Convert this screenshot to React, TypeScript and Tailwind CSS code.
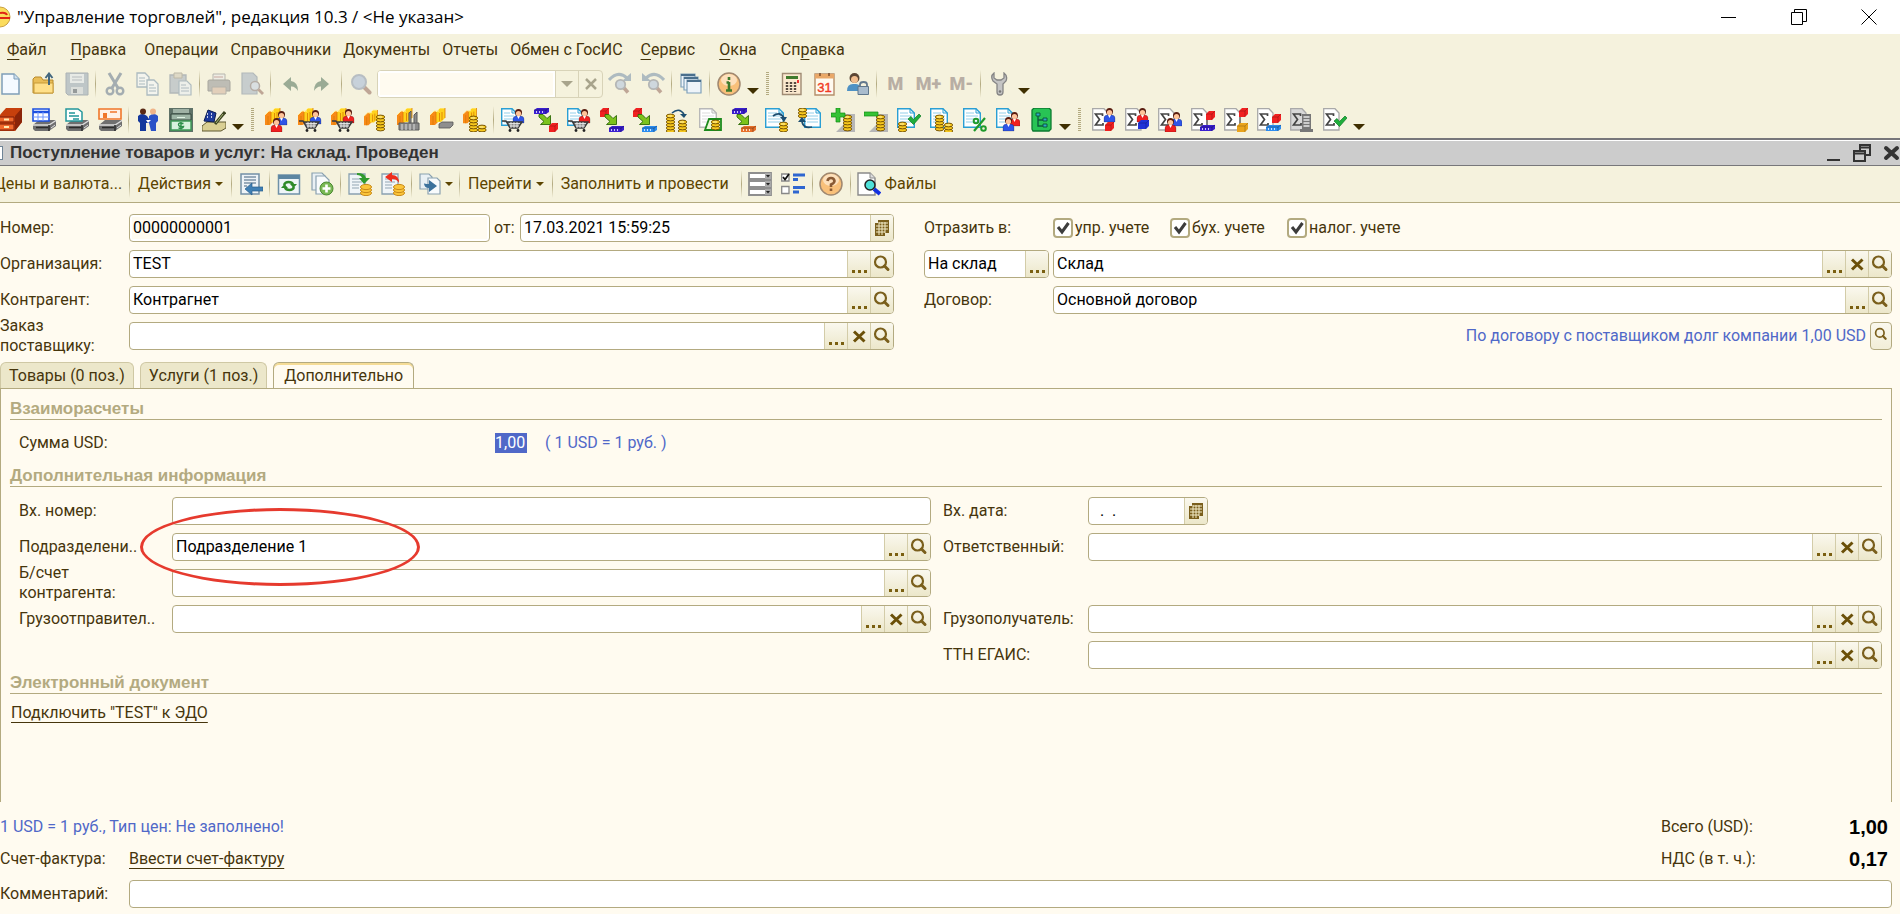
import { useId } from "react";
import type { ReactNode } from "react";
import clsx from "clsx";

type Tool = "dots" | "clear" | "open" | "calendar";

const BLUE = "#2f55e8";
const RED = "#f02020";

/* ---------- icon parts, all drawn on a 24x24 grid ---------- */

function Svg({ children, faded }: { children: ReactNode; faded?: boolean }) {
    return (
        <svg viewBox="0 0 24 24" aria-hidden="true" className={clsx("size-6 shrink-0", faded && "opacity-60")}>
            {children}
        </svg>
    );
}

function Person({ x, y, c }: { x: number; y: number; c: string }) {
    return (
        <g transform={`translate(${x} ${y})`}>
            <path d="M1 14V10Q1 7 5 7H8Q12 7 12 10V14Z" fill={c} stroke="#00000055" strokeWidth=".6" />
            <path d="M5 7L6.500 10L8 7Z" fill="#fff" />
            <circle cx="6.500" cy="3.500" r="3.500" fill="#5a1d10" />
            <circle cx="6.500" cy="4.600" r="2.600" fill="#ffc49a" />
        </g>
    );
}

function Cart() {
    return (
        <g>
            <path d="M1 13H5L9 20H17L21 14H5" fill="#8a8a8a" stroke="#3a3a3a" strokeWidth="1.400" />
            <path d="M8 15.500H19M9 18H18M10 14V20M13 14V20M16 14V20" stroke="#f0f0f0" strokeWidth=".8" fill="none" />
            <circle cx="9" cy="22.500" r="1.400" fill="#222" />
            <circle cx="17" cy="22.500" r="1.400" fill="#222" />
        </g>
    );
}

function Coins({ x, y, n }: { x: number; y: number; n: number }) {
    return (
        <g transform={`translate(${x} ${y})`}>
            {Array.from({ length: n }, (_, i) => (
                <ellipse key={i} cx="4.500" cy={(n - i) * 3 - 1} rx="4.200" ry="1.900" fill="#f7c81e" stroke="#6b4a00" strokeWidth=".9" />
            ))}
            <path d="M2 2H6" stroke="#fff6b0" />
        </g>
    );
}

function Stack() {
    return (
        <g>
            <path d="M0 17V7L4 3H9V13L5 17Z" fill="#f88a18" />
            <path d="M6 14V4L10 0H15V10L11 14Z" fill="#ffd21c" />
            <path d="M0 7L4 3H9M6 4L10 0H15" stroke="#fff0a0" fill="none" />
            <path d="M3 17V8M6 14V4M9.500 13V5M12 12V4M15 10V0" stroke="#d97800" strokeWidth=".8" fill="none" />
        </g>
    );
}

function Paper({ x = 0, y = 0, w = 16, h = 20, edge = "#2a9fd4" }: { x?: number; y?: number; w?: number; h?: number; edge?: string }) {
    return (
        <g transform={`translate(${x} ${y})`}>
            <path d={`M.7 .7H${w - 5}L${w - 0.7} 5V${h - 0.7}H.7Z`} fill="#fff" stroke={edge} strokeWidth="1.400" />
            <path d={`M${w - 5} .7V5H${w - 0.7}`} fill="none" stroke={edge} />
            <path d={`M3 5H${w - 7}M3 8H${w - 3}M3 11H${w - 3}M3 14H${w - 3}`} stroke={edge} strokeOpacity=".5" />
        </g>
    );
}

function Cube({ x, y, c, w = 9 }: { x: number; y: number; c: string; w?: number }) {
    return (
        <g transform={`translate(${x} ${y})`}>
            <path d={`M0 3L3 0H${w}V6L${w - 3} 9H0Z`} fill={c} />
            <path d={`M0 3H${w - 3}V9M${w - 3} 3L${w} 0`} stroke="#00000044" fill="none" strokeWidth=".8" />
        </g>
    );
}

function Slab({ x, y, c }: { x: number; y: number; c: string }) {
    return (
        <g transform={`translate(${x} ${y})`}>
            <path d="M0 2L3 0H15V4L12 6H0Z" fill={c} />
            <path d="M2 4H3M5 4H6M8 4H9" stroke="#fff" strokeWidth="1.300" />
            <path d="M0 2H12V6M12 2L15 0" stroke="#00000066" fill="none" strokeWidth=".8" />
        </g>
    );
}

const GreenArrow = () => (
    <path d="M5 6.500H9L13 10.500L16.500 7.500V16.500H6.500L10 13.500L5 9Z" fill="#7cc31c" stroke="#2f6a08" strokeWidth=".9" />
);

const Lens = () => (
    <g>
        <path d="M15 15L20.500 20.500" stroke="#9c7468" strokeWidth="4" strokeLinecap="round" />
        <circle cx="10" cy="10" r="7" fill="#a9bcd9" stroke="#8f9cb2" strokeWidth="2" />
    </g>
);

const Printer = ({ top }: { top: ReactNode }) => (
    <Svg>
        <path d="M1 17L7 12H23L24 13V18L17 23H3L1 21Z" fill="#6f6f6f" />
        <path d="M1 17H17L24 12.500" stroke="#ddd" fill="none" strokeWidth="1.400" />
        <path d="M4 19.500H16M17 17V23" stroke="#2b2b2b" strokeWidth="1.500" />
        <path d="M19 20L23 17" stroke="#e0e0e0" />
        {top}
    </Svg>
);

const Sigma = ({ children, gray }: { children: ReactNode; gray?: boolean }) => (
    <Svg>
        <path d="M.7 .7H12L16 5V22H.7Z" fill={gray ? "#d8d8d8" : "#fff"} stroke="#a9a9a9" strokeWidth="1.300" />
        <path d="M10.500 8V6H3.500L7.500 11.500L3.500 17H11V15" stroke="#444" strokeWidth="1.700" fill="none" />
        {children}
    </Svg>
);

const Check = ({ x, y }: { x: number; y: number }) => (
    <path transform={`translate(${x} ${y})`} d="M0 5L3 2.500L5.500 5.500L11 0L13 2L5.500 10.500Z" fill="#1fae3c" stroke="#0b7a22" strokeWidth=".7" />
);

/* ---------- standard toolbar ---------- */

const mainTools: [string, ReactNode][][] = [
    [
        ["Новый", <Svg><path d="M3 2H15L20 7V22H3Z" fill="#f5faff" stroke="#7f9fb8" strokeWidth="1.500" /><path d="M15 2V7H20" fill="#cfe0ee" stroke="#7f9fb8" /></Svg>],
        ["Открыть", <Svg><path d="M1 7L3 5H9L11 8H21V21H1Z" fill="#e9bd57" stroke="#b88a2a" /><path d="M2 11H21V21H2Z" fill="#ffe08a" stroke="#c79a38" /><path d="M17 13V3M13.500 6L17 1.500L20.500 6" fill="none" stroke="#42677f" strokeWidth="2" /></Svg>],
        ["Сохранить", <Svg faded><path d="M1 1H23V23H3L1 21Z" fill="#9aa9ba" stroke="#7d8a9a" /><path d="M5 2H19V11H5Z" fill="#dfe5ec" /><path d="M7 5H17M7 8H17" stroke="#8d9aaa" /><path d="M6 15H18V22H6Z" fill="#cbd1d9" /><path d="M8 17H12V21H8Z" fill="#56616e" /></Svg>],
    ],
    [
        ["Вырезать", <Svg faded><path d="M6 1L15 16M18 1L9 16" stroke="#6f8094" strokeWidth="3" /><circle cx="7" cy="19" r="3.300" fill="none" stroke="#6f8094" strokeWidth="2.400" /><circle cx="17" cy="19" r="3.300" fill="none" stroke="#6f8094" strokeWidth="2.400" /></Svg>],
        ["Копировать", <Svg faded><path d="M1 1H9L13 5V15H1Z" fill="#f2f6fa" stroke="#7c96ad" strokeWidth="1.300" /><path d="M3 6H9M3 9H9M3 12H9" stroke="#7c96ad" /><path d="M11 8H18L22 12V23H11Z" fill="#f2f6fa" stroke="#7c96ad" strokeWidth="1.300" /><path d="M13 13H18M13 16H20M13 19H20" stroke="#7c96ad" /></Svg>],
        ["Вставить", <Svg faded><path d="M1 3H17V21H1Z" fill="#a9b3c0" stroke="#8692a1" strokeWidth="1.300" /><path d="M5 1H13V6H5Z" fill="#cfc9b8" stroke="#9a9484" /><path d="M10 9H18L22 13V23H10Z" fill="#e9eef4" stroke="#8298ac" strokeWidth="1.200" /><path d="M12 13H17M12 16H20M12 19H20" stroke="#8298ac" /></Svg>],
    ],
    [
        ["Печать", <Svg faded><path d="M6 2H18V10H6Z" fill="#eaeaea" stroke="#909090" /><path d="M1 9Q1 8 3 8H21Q23 8 23 10V19H1Z" fill="#9b9b9b" stroke="#777" /><path d="M5 15H19V22H5Z" fill="#d6b8a4" stroke="#8a8a8a" /><path d="M7 5H16" stroke="#a77" /></Svg>],
        ["Просмотр", <Svg faded><path d="M2 1H13L17 5V22H2Z" fill="#a9b5c4" stroke="#8794a3" strokeWidth="1.200" /><circle cx="15" cy="14" r="4.500" fill="#c8d4e4" stroke="#8a7f80" strokeWidth="1.500" /><path d="M18.500 17.500L23 22" stroke="#9c7468" strokeWidth="2.800" /></Svg>],
    ],
    [
        ["Отменить", <Svg><path d="M5 12L13 5V9Q20 10 20 19Q17 14 13 14.500V19Z" fill="#9aab95" /></Svg>],
        ["Вернуть", <Svg><path d="M18 12L10 5V9Q3 10 3 19Q6 14 10 14.500V19Z" fill="#9aab95" /></Svg>],
    ],
];

const FindAround = ({ flip }: { flip?: boolean }) => (
    <Svg faded>
        <g transform={flip ? "translate(24 0) scale(-1 1)" : undefined}>
            <path d="M1 8Q10 -2 19 6" stroke="#7f97ae" strokeWidth="3" fill="none" />
            <path d="M23 1V9H14Z" fill="#7f97ae" />
        </g>
        <path d="M16 16L20 20.500" stroke="#9c7468" strokeWidth="3.500" />
        <circle cx="12.500" cy="12.500" r="4.700" fill="#b5c6de" stroke="#8a8f9c" strokeWidth="1.800" />
    </Svg>
);

const WindowsIcon = () => (
    <Svg>
        {[0, 3, 6].map((d) => (
            <g key={d}>
                <path d={`M${2 + d} ${2 + d}H${16 + d}V${15 + d}H${2 + d}Z`} fill="#eef4f9" stroke="#7fa0ba" strokeWidth="1.200" />
                <path d={`M${2 + d} ${3 + d}H${16 + d}`} stroke="#4a6f8c" strokeWidth="2" />
            </g>
        ))}
    </Svg>
);

const Ball = ({ mark, c }: { mark: string; c: string }) => (
    <Svg>
        <circle cx="12" cy="12" r="11" fill="#f9c07a" stroke="#a08870" strokeWidth="1.500" />
        <ellipse cx="12" cy="8" rx="8" ry="6" fill="#ffeed8" opacity=".7" />
        <path d={mark} stroke={c} strokeWidth="2.600" fill="none" />
    </Svg>
);

const serviceTools: [string, ReactNode][] = [
    ["Калькулятор", <Svg><path d="M2.500 1.500H21V22.500H2.500Z" fill="#fbe9cf" stroke="#a08c74" strokeWidth="1.400" /><path d="M6 4H18V7H6Z" fill="#3f7a2c" /><path d="M7 10V20M11 10V20M15 10V20" stroke="#554a40" strokeWidth="2.400" strokeDasharray="2 1" /><path d="M18 8V11" stroke="#e33" strokeWidth="2" /></Svg>],
    ["Календарь", <Svg><path d="M2 2H21V23H2Z" fill="#fffaf0" stroke="#b58f6a" strokeWidth="1.400" /><path d="M2 2H21V6.500H2Z" fill="#e9a868" /><path d="M7 1V4M16 1V4" stroke="#7a4b2a" strokeWidth="1.500" /><text x="11.500" y="20" textAnchor="middle" fontSize="13" fill="#f03a24" stroke="#f03a24" strokeWidth=".4" fontFamily="Liberation Sans, sans-serif">31</text></Svg>],
    ["Пользователи", <Svg><path d="M1 19Q1 12 7 12H10Q15 12 15 19Z" fill="#4f92c4" /><circle cx="8.500" cy="6" r="5" fill="#5b4634" /><circle cx="8.500" cy="7.500" r="3.500" fill="#f1bd8e" /><path d="M14 15V12.500Q14 10 17.500 10T21 12.500V15" fill="none" stroke="#62788d" strokeWidth="1.800" /><path d="M12 14.500H22.500V22.500H12Z" fill="#a9bccd" stroke="#5f778c" /></Svg>],
];

/* ---------- trade toolbars ---------- */

const tradeTools: [string, ReactNode][][] = [
    [
        ["Картотека", <Svg><path d="M0 8L7 0H23V14L16 23H0Z" fill="#c6400c" /><path d="M16 8L23 0V14L16 23Z" fill="#8a2408" /><path d="M0 9H15V14H0ZM0 16H15V22H0Z" fill="#f0692c" stroke="#7a1c08" /><path d="M5 11.500H10M5 19H10" stroke="#ffe9b0" strokeWidth="2" /></Svg>],
        ["Печать таблицы", <Printer top={<g><path d="M1 1H17V13H1Z" fill="#fff" stroke="#1d50e0" strokeWidth="1.600" /><path d="M1 4H17" stroke="#1d50e0" strokeWidth="2.500" /><path d="M6 4V13M11 4V13M1 9H17" stroke="#6e96ff" /></g>} />],
        ["Печать документа", <Printer top={<g><path d="M1 1H13L17 4V13H1Z" fill="#fff" stroke="#22969a" strokeWidth="1.500" /><path d="M4 5H10M4 8H14M8 11H14" stroke="#22969a" strokeWidth="1.400" /></g>} />],
        ["Печать ценников", <Printer top={<g><path d="M1 1H23V11H1Z" fill="#fff2e6" stroke="#f0762a" strokeWidth="1.600" /><path d="M5 5H9V10H5Z" fill="#f0762a" /><path d="M12 4H19" stroke="#f0762a" strokeWidth="1.500" /></g>} />],
    ],
    [
        ["Контрагенты", <Svg><path d="M2 8Q6 4 11 8L13 11V15H10V23H4V15L2 13Z" fill="#14389c" /><path d="M22 8Q18 4 13 8V15L15 23H20V15L22 13Z" fill="#2b52c8" /><circle cx="7" cy="3.500" r="3" fill="#5a2a14" /><circle cx="17" cy="3.500" r="3" fill="#f0b488" /><path d="M10 12H15L12 15Z" fill="#fff" /></Svg>],
        ["Касса", <Svg><path d="M0 0H24V24H0Z" fill="#5f7268" /><path d="M4 1H20V5H4Z" fill="#9fb2a5" /><path d="M2 6H22V12H2Z" fill="#9cb4a4" stroke="#33453a" /><path d="M8 9.500H16" stroke="#dff3e4" /><path d="M2 13H22V22H2Z" fill="#d6f2dc" stroke="#3c9a54" strokeWidth="1.400" /><path d="M14.500 15.500Q9.500 14 9.500 16.500T14.500 18.500Q14 21 9.500 20M12 14V21.500" stroke="#2b8f48" strokeWidth="1.400" fill="none" /></Svg>],
        ["Розница", <Svg><path d="M0 18L5 14H24V20L19 23H0Z" fill="#d9cf93" stroke="#5f5830" /><path d="M6 2L14 5L12 14L2 13Z" fill="#1d3a9c" stroke="#0a1b52" /><path d="M5 6H6M9 6H10M5 9H6M9 9H10" stroke="#fff" strokeWidth="1.600" /><path d="M13 16L23 4" stroke="#3c4420" strokeWidth="3" /><path d="M14 15L21 6" stroke="#a8b878" /></Svg>],
    ],
];

const catalogTools: [string, ReactNode][] = [
    ["Заказы", <Svg><Stack /><Person x={10} y={3} c={BLUE} /><Person x={5} y={10} c={RED} /></Svg>],
    ["Покупатели", <Svg><Stack /><Person x={11} y={2} c={BLUE} /><Cart /></Svg>],
    ["Поставщики", <Svg><Stack /><Person x={11} y={1} c={RED} /><Cart /></Svg>],
    ["Цены", <Svg><g transform="translate(0 2) scale(.9)"><Stack /></g><Coins x={12} y={7} n={5} /></Svg>],
    ["Склад", <Svg><Stack /><path d="M2 15H22V22H2ZM12 15V5L14 3V15M17 15V7L20 4V15" fill="#8b8b8b" stroke="#5a5a5a" /><path d="M5 16V22M9 16V22M13 16V22M17 16V22" stroke="#ddd" /></Svg>],
    ["Оборудование", <Svg><Stack /><path d="M9 16L12 14H23V17L20 20H9Z" fill="#8e8e8e" stroke="#555" strokeWidth=".8" /></Svg>],
    ["Остатки", <Svg><g transform="scale(.9)"><Stack /></g><Coins x={6} y={8} n={5} /><Coins x={14.500} y={17} n={2} /></Svg>],
];

const documentTools: [string, ReactNode][] = [
    ["Заказ покупателя", <Svg><Paper h={18} /><Person x={11} y={1} c={BLUE} /><Cart /></Svg>],
    ["Реализация", <Svg><Slab x={0} y={0} c="#3a1fd0" /><GreenArrow /><Cube x={15} y={15} c={RED} /></Svg>],
    ["Заказ поставщику", <Svg><Paper h={18} /><Person x={11} y={1} c={RED} /><Cart /></Svg>],
    ["Поступление", <Svg><Cube x={0} y={0} c={RED} /><GreenArrow /><Slab x={9} y={18} c="#3a1fd0" /></Svg>],
    ["Перемещение", <Svg><Cube x={0} y={0} c={RED} /><GreenArrow /><Slab x={9} y={18} c="#2b8cf0" /></Svg>],
    ["Обмен валют", <Svg><Coins x={0} y={6} n={6} /><Coins x={12} y={12} n={4} /><path d="M6 5Q13 -1 18 6" fill="none" stroke="#1d4e70" strokeWidth="1.600" /><path d="M14 6H21L18 10Z" fill="#1d4e70" /></Svg>],
    ["Платеж", <Svg><Paper edge="#b8b8b8" w={18} /><path d="M6 22L10 11H22V22Z" fill="#e9f7d4" stroke="#1c8a1c" strokeWidth="1.800" /><Coins x={12} y={12} n={3} /></Svg>],
    ["Передача", <Svg><Slab x={0} y={0} c="#3a1fd0" /><GreenArrow /><Slab x={9} y={18} c="#e8702a" /></Svg>],
    ["Исходящий платеж", <Svg><Paper w={19} /><path d="M8 8Q15 3 19 10" fill="none" stroke="#1d4e70" strokeWidth="1.800" /><path d="M15 9H22L19 14Z" fill="#1d4e70" /><Coins x={14} y={14} n={3} /></Svg>],
    ["Входящий платеж", <Svg><Paper x={6} w={17} /><Coins x={0} y={0} n={3} /><path d="M14 19Q6 21 4 14" fill="none" stroke="#1d4e70" strokeWidth="1.800" /><path d="M0 14H8L4 9Z" fill="#1d4e70" /></Svg>],
    ["Приход", <Svg><path d="M12 6H24V24H5L12 17Z" fill="#b6b6b6" /><Coins x={12} y={7} n={5} /><path d="M5 0H9V5H14V9H9V14H5V9H0V5H5Z" fill="#35c235" stroke="#138a13" strokeWidth=".7" /></Svg>],
    ["Расход", <Svg><path d="M12 6H24V24H5L12 17Z" fill="#b6b6b6" /><Coins x={12} y={7} n={5} /><path d="M0 4H14V8H0Z" fill="#35c235" stroke="#138a13" strokeWidth=".7" /></Svg>],
    ["Проведение", <Svg><Paper w={18} /><Check x={11} y={6} /><Coins x={1} y={14} n={3} /></Svg>],
    ["Ведомость", <Svg><Paper w={18} /><Coins x={5} y={7} n={5} /><Coins x={14} y={15} n={3} /></Svg>],
    ["Скидки", <Svg><Paper w={18} /><path d="M11 23L22 10" stroke="#1f9a2c" strokeWidth="2.200" /><circle cx="13" cy="13" r="2.300" fill="none" stroke="#1f9a2c" strokeWidth="2" /><circle cx="20.500" cy="20.500" r="2.300" fill="none" stroke="#1f9a2c" strokeWidth="2" /></Svg>],
    ["Взаиморасчеты", <Svg><Paper w={17} /><Person x={12} y={4} c={RED} /><Person x={6} y={9} c={BLUE} /></Svg>],
    ["Структура", <Svg><path d="M5 0H20L22 2V21L20 23H4L3 21V2Z" fill="#28c455" stroke="#0d7a30" strokeWidth="1.300" /><path d="M9 7V18H15M9 12H15" fill="none" stroke="#0c5c3c" strokeWidth="1.400" /><path d="M7 5H11V8H7ZM14 10H18V13H14ZM14 16H18V19H14Z" fill="#2fa7c9" stroke="#0c5c3c" /></Svg>],
];

const reportTools: [string, ReactNode][] = [
    ["Продажи", <Sigma><Person x={11} y={0} c={BLUE} /><Cube x={13} y={14} c={RED} /></Sigma>],
    ["Закупки", <Sigma><Person x={11} y={0} c={RED} /><Cube x={13} y={12} c="#2033d8" w={11} /></Sigma>],
    ["Контрагенты", <Sigma><Person x={12} y={4} c={BLUE} /><Person x={6} y={10} c={RED} /></Sigma>],
    ["Партии", <Sigma><path d="M16 10V18" stroke="#444" /><Cube x={15} y={3} c={RED} /><Slab x={9} y={17} c="#3a1fd0" /></Sigma>],
    ["Товары", <Sigma><path d="M16 8V18" stroke="#444" /><Cube x={15} y={0} c={RED} /><Cube x={13} y={15} c="#eaa41c" w={11} /></Sigma>],
    ["Остатки товаров", <Sigma><Cube x={15} y={6} c={RED} /><Slab x={9} y={17} c="#2b8cf0" /></Sigma>],
    ["Анализ", <Sigma gray><path d="M12 6H21V21H23V24H10V21H12Z" fill="#777" /><path d="M13.500 9H19.500M13.500 12H19.500M13.500 15H19.500M13.500 18H19.500" stroke="#e8e8e8" strokeWidth="1.500" /></Sigma>],
    ["Контроль", <Sigma><Check x={11} y={8} /></Sigma>],
];

/* ---------- document toolbar icons ---------- */

const ListBack = () => <Svg><path d="M2 2H20V22H2Z" fill="#eef3f7" stroke="#7390a6" strokeWidth="1.500" /><path d="M5 5H17M5 8H17M5 11H17M5 14H8" stroke="#7c93a6" strokeWidth="1.300" /><path d="M6 17L13 11V15H24V19H13V23Z" fill="#3f7fb4" stroke="#295f8c" strokeWidth=".7" /></Svg>;
const Reload = () => (
    <Svg>
        <path d="M1.500 3H22.500V22H1.500Z" fill="#eff5f8" stroke="#6f91a8" strokeWidth="1.500" />
        <path d="M1.500 3H22.500V7H1.500Z" fill="#5d86a2" />
        <path d="M7 13Q8 10 11.500 10T16 12.500M17 15Q16 18 12.500 18T8 15.500" fill="none" stroke="#2f8a2a" strokeWidth="2.400" />
        <path d="M13 12H20L16.500 16ZM4 16H11L7.500 12Z" fill="#2f8a2a" />
    </Svg>
);
const CopyPlus = () => <Svg><path d="M2 1H12L15 4V18H2Z" fill="#e9f0f4" stroke="#8aa1b0" strokeWidth="1.200" /><path d="M6 4H15L19 8V22H6Z" fill="#f8fbfc" stroke="#8aa1b0" strokeWidth="1.200" /><circle cx="16.500" cy="16.500" r="6.500" fill="#79b854" stroke="#4a8a30" /><path d="M16.500 12.500V20.500M12.500 16.500H20.500" stroke="#fff" strokeWidth="2.600" /></Svg>;
const Post = ({ undo }: { undo?: boolean }) => (
    <Svg>
        <path d="M1 2H17V22H1Z" fill="#f0f5f8" stroke="#89a0b0" strokeWidth="1.300" />
        <path d="M4 7H14M4 10H14M4 13H11M4 16H11" stroke="#92a5b3" />
        <g transform="translate(12 10)">
            {[9, 6, 3].map((y) => <ellipse key={y} cx="6" cy={y + 2} rx="5.500" ry="2.600" fill="#fbc53a" stroke="#c98a18" />)}
        </g>
        {undo ? (
            <path d="M4 5L11 0V3Q18 3 18 11Q16 7 11 7V10Z" fill="#ee2c1c" />
        ) : (
            <path d="M9 1Q17 1 18 6H22L16 12L11 6H14Q13 3 9 3Z" fill="#2f9a2c" />
        )}
    </Svg>
);
const BasedOn = () => <Svg><path d="M1 2H10L13 5V17H1Z" fill="#e9f0f4" stroke="#8aa1b0" strokeWidth="1.200" /><path d="M9 6H18L21 9V22H9Z" fill="#f8fbfc" stroke="#8aa1b0" strokeWidth="1.200" /><path d="M5 6V11Q5 12 10 12V8L18 14L10 20V16Q5 16 5 11Z" fill="#3c729c" /></Svg>;
const Lines = () => (
    <Svg>
        {[0, 8, 16].map((y) => (
            <g key={y}>
                <path d={`M1 ${y + 1}H23V${y + 7}H1Z`} fill="#fff" stroke="#8e8e8e" strokeWidth="1.800" />
                <path d={`M17 ${y + 1}H23V${y + 7}H17Z`} fill="#a9a9a9" />
                <path d={`M18 ${y + 3}H22L20 ${y + 5.5}Z`} fill="#222" />
            </g>
        ))}
    </Svg>
);
const Options = () => <Svg><path d="M.7 2H8V9H.7ZM.7 14.500H8V21.500H.7Z" fill="#fff" stroke="#888" strokeWidth="1.300" /><path d="M2 5L4 7.500L8 2" fill="none" stroke="#111" strokeWidth="1.800" /><path d="M12 3H24M12 15.500H24" stroke="#2f66d0" strokeWidth="3.200" /><path d="M12 7.500H17M12 20H18" stroke="#2f66d0" strokeWidth="2.800" /></Svg>;
const Files = () => <Svg><path d="M1 1H13L18 6V23H1Z" fill="#fff" stroke="#8a8a8a" strokeWidth="1.400" /><path d="M13 1V6H18" fill="#ddd" stroke="#8a8a8a" /><path d="M17 17L23 22" stroke="#1430e0" strokeWidth="4" /><circle cx="13" cy="13" r="5" fill="#4fe0d8" stroke="#222" strokeWidth="1.500" /></Svg>;

/* ---------- toolbar pieces ---------- */

const ToolButton = ({ name, children }: { name: string; children: ReactNode }) => (
    <button type="button" aria-label={name} title={name} className="flex h-8 w-[33px] shrink-0 items-center justify-center">
        {children}
    </button>
);

const Sep = () => (
    <span className="flex w-[5px] shrink-0 justify-center">
        <span className="h-7 w-px bg-gradient-to-b from-transparent via-[#b3aa80] to-transparent" />
    </span>
);

const Grip = () => (
    <span className="mr-1.5 ml-[5px] h-6 w-[3px] shrink-0 bg-[repeating-linear-gradient(to_bottom,#b3aa80_0px,#b3aa80_1px,transparent_1px,transparent_2px)]" />
);

const More = () => (
    <button type="button" aria-label="Еще" className="flex h-6 w-[16px] shrink-0 items-end justify-center pb-0.5">
        <svg viewBox="0 0 12 6" className="h-1.5 w-3"><path d="M0 0H12L6 6Z" fill="#3f2f00" /></svg>
    </button>
);

const Caret = () => (
    <svg viewBox="0 0 8 4" className="h-1 w-2 shrink-0"><path d="M0 0H8L4 4Z" fill="#5c4400" /></svg>
);

function ToolGroups({ groups }: { groups: [string, ReactNode][][] }) {
    return (
        <>
            {groups.map((group, i) => (
                <div key={i} className="flex items-center">
                    {i > 0 && <Sep />}
                    {group.map(([name, icon]) => <ToolButton key={name} name={name}>{icon}</ToolButton>)}
                </div>
            ))}
        </>
    );
}

/* ---------- form pieces ---------- */

const toolNames: Record<Tool, string> = { dots: "Выбрать", clear: "Очистить", open: "Открыть", calendar: "Календарь" };

const toolIcons: Record<Tool, ReactNode> = {
    dots: <path d="M4 19H7V22H4ZM10 19H13V22H10ZM16 19H19V22H16Z" fill="#7a5f10" />,
    clear: <path d="M6 8.500L16.500 18.500M16.500 8.500L6 18.500" stroke="#6b5008" strokeWidth="3" />,
    open: <g stroke="#7a5f1c" fill="none"><circle cx="9.500" cy="11" r="5.500" strokeWidth="2.200" /><path d="M13.500 15L17 18.500" strokeWidth="3" strokeLinecap="round" /></g>,
    calendar: <g><path d="M7 5H18V18H14V21H4V8H7Z" fill="#7a5f1c" /><path d="M8 8H17M5 11H17M5 14H17M5 17H14M8 7V20M11 7V20M14 7V18" stroke="#f3edc8" strokeWidth="1" /></g>,
};

function FieldButton({ tool }: { tool: Tool }) {
    return (
        <button
            type="button"
            aria-label={toolNames[tool]}
            className="flex w-[23px] shrink-0 items-center justify-center border-l border-[#d3cca8] bg-gradient-to-b from-[#faf8ee] to-[#ece7ca]"
        >
            <svg viewBox="0 0 22 26" className="h-[26px] w-[22px]">{toolIcons[tool]}</svg>
        </button>
    );
}

function Box({ id, value = "", tools = [], label, readOnly, className }: {
    id?: string;
    value?: string;
    tools?: Tool[];
    label?: string;
    readOnly?: boolean;
    className?: string;
}) {
    return (
        <div className={clsx("flex h-7 min-w-0 overflow-hidden rounded border border-[#b3aa80] bg-white", className ?? "flex-1")}>
            <input
                id={id}
                aria-label={label}
                defaultValue={value}
                readOnly={readOnly}
                className={clsx("min-w-0 flex-1 px-[3px] text-black outline-none", readOnly && "m-0.5 bg-[#fffbf0] px-px")}
            />
            {tools.map((tool) => <FieldButton key={tool} tool={tool} />)}
        </div>
    );
}

function Field({ label, labelClass, children, ...box }: {
    label: string;
    labelClass: string;
    value?: string;
    tools?: Tool[];
    className?: string;
    readOnly?: boolean;
    children?: ReactNode;
}) {
    const id = useId();
    return (
        <div className="relative flex h-7 items-center">
            <label htmlFor={id} className={clsx("shrink-0", labelClass)}>{label}</label>
            <Box id={id} {...box} />
            {children}
        </div>
    );
}

function CheckBox({ label }: { label: string }) {
    return (
        <label className="flex w-[117px] items-center gap-0.5 whitespace-nowrap">
            <span className="relative flex size-5 shrink-0">
                <input type="checkbox" defaultChecked className="peer size-5 appearance-none rounded border-2 border-[#b3aa80] bg-white" />
                <svg viewBox="0 0 20 20" className="pointer-events-none absolute inset-0 hidden size-5 peer-checked:block">
                    <path d="M5 9L9 14L15.500 5" fill="none" stroke="#3c3c3c" strokeWidth="3" />
                </svg>
            </span>
            {label}
        </label>
    );
}

const Heading = ({ children }: { children: ReactNode }) => (
    <h2 className="border-b border-[#b3aa80] font-['Liberation_Sans',sans-serif] text-[17px] leading-5 font-bold text-[#b3aa80]">{children}</h2>
);

const menu: [string, string, string][] = [
    ["", "Ф", "айл"],
    ["", "П", "равка"],
    ["Операции", "", ""],
    ["Справочники", "", ""],
    ["Документы", "", ""],
    ["Отчеты", "", ""],
    ["Обмен с ГосИС", "", ""],
    ["", "С", "ервис"],
    ["", "О", "кна"],
    ["Сп", "р", "авка"],
];

const tabs = ["Товары (0 поз.)", "Услуги (1 поз.)", "Дополнительно"];

const outerLabel = "w-[129px] pr-6";
const innerLabel = "w-[153px] pr-3";
const innerRight = "w-[145px]";

export default function App() {
    return (
        <div className="flex min-h-screen flex-col overflow-x-hidden bg-[#fffbf0] font-['Roboto','Liberation_Sans',sans-serif] text-[16px] leading-5 text-[#46350c]">
            <header className="bg-[#f5f2dd]">
                <div className="flex h-[34px] items-center bg-white text-black">
                    <svg viewBox="0 0 11 22" className="mr-1.5 h-[22px] w-[11px]">
                        <circle cx="0" cy="11" r="10" fill="#fbdc5c" stroke="#c9a040" />
                        <path d="M0 7Q6 6 7 9M0 12H10" stroke="#e02414" strokeWidth="2" fill="none" />
                    </svg>
                    <h1 className="flex-1 font-['Open_Sans',sans-serif] text-[17px]">"Управление торговлей", редакция 10.3 / &lt;Не указан&gt;</h1>
                    <div className="flex items-center gap-[54px] pr-[23px]">
                        <button type="button" aria-label="Свернуть"><svg viewBox="0 0 16 16" className="size-4"><path d="M0 8.500H15" stroke="#000" /></svg></button>
                        <button type="button" aria-label="Восстановить"><svg viewBox="0 0 16 16" className="size-4" fill="none" stroke="#000"><path d="M.5 3.500H11.500V15.500H.5ZM3.500 3.500V.5H15.500V12.500H11.500" /></svg></button>
                        <button type="button" aria-label="Закрыть"><svg viewBox="0 0 16 16" className="size-4"><path d="M.5 .5L15.500 15.500M15.500 .5L.5 15.500" stroke="#000" /></svg></button>
                    </div>
                </div>

                <nav className="-ml-[5px] flex h-8 items-center">
                    {menu.map(([before, key, after]) => (
                        <button key={before + key + after} type="button" className={key ? "px-3" : "px-1.5"}>
                            {before}{key && <u className="underline-offset-4">{key}</u>}{after}
                        </button>
                    ))}
                </nav>

                <div className="-ml-[6px] flex h-9 items-center">
                    <ToolGroups groups={mainTools} />
                    <Sep />
                    <ToolButton name="Найти"><Svg faded><Lens /></Svg></ToolButton>
                    <div className="flex h-7 w-[226px] overflow-hidden rounded border border-[#d8d3b8]">
                        <input aria-label="Поиск" className="min-w-0 flex-1 border-2 border-white bg-[#fffbf0] outline-none" />
                        <button type="button" aria-label="История поиска" className="flex w-[23px] items-center justify-center border-l border-[#d8d3b8]">
                            <svg viewBox="0 0 12 6" className="h-1.5 w-3"><path d="M0 0H12L6 6Z" fill="#a8a48c" /></svg>
                        </button>
                        <button type="button" aria-label="Очистить поиск" className="flex w-6 items-center justify-center border-l border-[#d8d3b8]">
                            <svg viewBox="0 0 12 12" className="size-3"><path d="M1 1L11 11M11 1L1 11" stroke="#a8a48c" strokeWidth="2.500" /></svg>
                        </button>
                    </div>
                    <ToolButton name="Найти следующий"><FindAround /></ToolButton>
                    <ToolButton name="Найти предыдущий"><FindAround flip /></ToolButton>
                    <Sep />
                    <ToolButton name="Окна"><WindowsIcon /></ToolButton>
                    <Sep />
                    <ToolButton name="Справка"><Ball mark="M12 5V8M12 10V19M9.500 10.500H12M9 18.500H15" c="#3f7a2c" /></ToolButton>
                    <More />
                    <Grip />
                    {serviceTools.map(([name, icon]) => <ToolButton key={name} name={name}>{icon}</ToolButton>)}
                    <Sep />
                    {["M", "M+", "M-"].map((m) => (
                        <button key={m} type="button" className="w-[33px] text-[18px] font-black text-[#b8aea4]">{m}</button>
                    ))}
                    <Sep />
                    <ToolButton name="Настройки">
                        <Svg><path d="M6 1V6L9 8H13L16 6V1Q20 4 18 9L15 12V20Q15 23 12 23T9 20V12L5 9Q2 4 6 1Z" fill="#c4c4c4" stroke="#858585" strokeWidth="1.300" /><circle cx="12" cy="19.500" r="1.300" fill="#777" /></Svg>
                    </ToolButton>
                    <More />
                </div>

                <div className="-ml-[6px] flex h-9 items-center">
                    <ToolGroups groups={tradeTools} />
                    <More />
                    <Grip />
                    <ToolGroups groups={[catalogTools, documentTools]} />
                    <More />
                    <Grip />
                    <ToolGroups groups={[reportTools]} />
                    <More />
                </div>
            </header>

            <div className="border-t-2 border-b border-[#77777a]">
                <div className="flex h-[25px] items-center border-t border-white bg-[#ccc] text-[#333]">
                    <span className="mr-[7px] h-3.5 w-[3px] border-y border-r border-[#6f8496] bg-white" />
                    <h2 className="flex-1 font-['Liberation_Sans',sans-serif] text-[17px] font-bold">Поступление товаров и услуг: На склад. Проведен</h2>
                    <button type="button" aria-label="Свернуть документ" className="mr-3"><svg viewBox="0 0 14 18" className="h-[18px] w-3.5"><path d="M0 16H13" stroke="#333" strokeWidth="2" /></svg></button>
                    <button type="button" aria-label="Восстановить документ" className="mr-3"><svg viewBox="0 0 18 18" className="size-[18px]" fill="none" stroke="#333" strokeWidth="2"><path d="M1 7H12V17H1ZM1 9.500H12M7 6V1H17V11H13M7 3.500H17" /></svg></button>
                    <button type="button" aria-label="Закрыть документ"><svg viewBox="0 0 17 18" className="h-[18px] w-[17px]"><path d="M3 4L14 14M14 4L3 14" stroke="#333" strokeWidth="4" strokeLinecap="round" /></svg></button>
                </div>
            </div>

            <div className="flex h-[37px] items-center border-b border-[#b3aa80] bg-[#f5f2dd] whitespace-nowrap text-[#5c4400]">
                <button type="button" className="-ml-1.5 pr-[5px]">Цены и валюта...</button>
                <Sep />
                <button type="button" className="flex items-center gap-1 px-1.5">Действия <Caret /></button>
                <Sep />
                <ToolButton name="Перейти к списку"><ListBack /></ToolButton>
                <Sep />
                <ToolButton name="Перечитать"><Reload /></ToolButton>
                <ToolButton name="Скопировать"><CopyPlus /></ToolButton>
                <Sep />
                <ToolButton name="Провести"><Post /></ToolButton>
                <ToolButton name="Отмена проведения"><Post undo /></ToolButton>
                <Sep />
                <button type="button" aria-label="Ввести на основании" className="flex w-[43px] items-center justify-center gap-0.5"><BasedOn /><Caret /></button>
                <Sep />
                <button type="button" className="flex items-center gap-1 px-1.5">Перейти <Caret /></button>
                <Sep />
                <button type="button" className="pr-2.5 pl-1.5">Заполнить и провести</button>
                <Sep />
                <ToolButton name="Построчно"><Lines /></ToolButton>
                <ToolButton name="Настройка списка"><Options /></ToolButton>
                <Sep />
                <ToolButton name="Помощь"><Ball mark="M8.500 9Q9 6 12 6T15.500 9Q15.500 11 12 12.500V15M12 16.500V19" c="#8a5a34" /></ToolButton>
                <Sep />
                <button type="button" className="flex items-center gap-1 pl-1"><Files />Файлы</button>
            </div>

            <main className="flex flex-1 flex-col pr-2">
                <div className="grid grid-cols-[894fr_968fr] gap-x-[30px] pt-[11px]">
                    <div className="flex flex-col gap-2">
                        <div className="flex">
                            <div className="w-[490px]">
                                <Field label="Номер:" labelClass={outerLabel} value="00000000001" readOnly />
                            </div>
                            <div className="flex-1 pl-1">
                                <Field label="от:" labelClass="w-[26px]" value="17.03.2021 15:59:25" tools={["calendar"]} />
                            </div>
                        </div>
                        <Field label="Организация:" labelClass={outerLabel} value="TEST" tools={["dots", "open"]} />
                        <Field label="Контрагент:" labelClass={outerLabel} value="Контрагнет" tools={["dots", "open"]} />
                        <Field label="Заказ поставщику:" labelClass={outerLabel} tools={["dots", "clear", "open"]} />
                    </div>
                    <div className="flex flex-col gap-2">
                        <div className="flex h-7 items-center">
                            <span className="w-[129px]">Отразить в:</span>
                            <CheckBox label="упр. учете" />
                            <CheckBox label="бух. учете" />
                            <CheckBox label="налог. учете" />
                        </div>
                        <div className="flex gap-1">
                            <Box label="Вид поступления" value="На склад" tools={["dots"]} className="w-[125px]" />
                            <Box label="Склад" value="Склад" tools={["dots", "clear", "open"]} />
                        </div>
                        <Field label="Договор:" labelClass="w-[129px]" value="Основной договор" tools={["dots", "open"]} />
                        <div className="flex h-7 items-center justify-end gap-1 text-[#5068c8]">
                            По договору с поставщиком долг компании 1,00 USD
                            <button type="button" aria-label="Взаиморасчеты" className="h-7 rounded border border-[#b3aa80] bg-gradient-to-b from-[#faf8ee] to-[#f2eed8]">
                                <svg viewBox="-2 0 26 30" className="h-[26px] w-5">{toolIcons.open}</svg>
                            </button>
                        </div>
                    </div>
                </div>

                <div role="tablist" className="mt-3 flex gap-1.5">
                    {tabs.map((tab, i) => (
                        <button
                            key={tab}
                            type="button"
                            role="tab"
                            aria-selected={i === 2}
                            className={clsx(
                                "rounded-t-md border border-b-0",
                                i === 2
                                    ? "-mb-px h-[27px] border-[#b3aa80] bg-[#fffbf0] px-2.5 shadow-[inset_0_2px_0_#f5dc96]"
                                    : "h-[26px] border-[#cfc8a4] bg-[#ece7ca] px-2",
                            )}
                        >
                            {tab}
                        </button>
                    ))}
                </div>

                <div role="tabpanel" className="flex-1 border border-b-0 border-[#b3aa80] px-[9px] pt-2.5">
                    <Heading>Взаиморасчеты</Heading>
                    <div className="flex items-center pt-3 pl-[9px] leading-[22px]">
                        <label htmlFor="sum" className="w-[476px]">Сумма USD:</label>
                        <input id="sum" defaultValue="1,00" className="h-5 w-8 bg-[#5068c8] text-white outline-none" />
                        <span className="pl-[18px] text-[#5068c8]">( 1 USD = 1 руб. )</span>
                    </div>

                    <div className="pt-3">
                        <Heading>Дополнительная информация</Heading>
                    </div>
                    <div className="grid grid-cols-[912fr_939fr] gap-x-3 pt-2.5 pl-[9px]">
                        <div className="flex flex-col gap-2">
                            <Field label="Вх. номер:" labelClass={innerLabel} />
                            <Field label="Подразделени.." labelClass={innerLabel} value="Подразделение 1" tools={["dots", "open"]}>
                                <span className="pointer-events-none absolute -top-[25px] left-[121px] z-10 h-[78px] w-[280px] rounded-[50%] border-[3px] border-[#e63a2e]" />
                            </Field>
                            <Field label="Б/счет контрагента:" labelClass={innerLabel} tools={["dots", "open"]} />
                            <Field label="Грузоотправител.." labelClass={innerLabel} tools={["dots", "clear", "open"]} />
                        </div>
                        <div className="flex flex-col gap-2">
                            <Field label="Вх. дата:" labelClass={innerRight} value="  .  ." tools={["calendar"]} className="w-[120px]" />
                            <Field label="Ответственный:" labelClass={innerRight} tools={["dots", "clear", "open"]} />
                            <div className="h-7" />
                            <Field label="Грузополучатель:" labelClass={innerRight} tools={["dots", "clear", "open"]} />
                            <Field label="ТТН ЕГАИС:" labelClass={innerRight} tools={["dots", "clear", "open"]} />
                        </div>
                    </div>

                    <div className="pt-1">
                        <Heading>Электронный документ</Heading>
                    </div>
                    <a href="#edo" className="mt-2 ml-px inline-block leading-[22px] underline underline-offset-4">Подключить "TEST" к ЭДО</a>
                </div>
            </main>

            <footer className="flex flex-col gap-2.5 pt-3.5 pr-2 pb-1.5">
                <div className="flex leading-[22px]">
                    <span className="flex-1 text-[#5068c8]">1 USD = 1 руб., Тип цен: Не заполнено!</span>
                    <span className="w-[97px]">Всего (USD):</span>
                    <b className="w-[134px] pr-1 text-right font-['Liberation_Sans',sans-serif] text-[20px] text-black">1,00</b>
                </div>
                <div className="flex leading-[22px]">
                    <span className="w-[129px]">Счет-фактура:</span>
                    <span className="flex-1"><a href="#invoice" className="underline underline-offset-4">Ввести счет-фактуру</a></span>
                    <span className="w-[97px]">НДС (в т. ч.):</span>
                    <b className="w-[134px] pr-1 text-right font-['Liberation_Sans',sans-serif] text-[20px] text-black">0,17</b>
                </div>
                <Field label="Комментарий:" labelClass={outerLabel} />
            </footer>
        </div>
    );
}
